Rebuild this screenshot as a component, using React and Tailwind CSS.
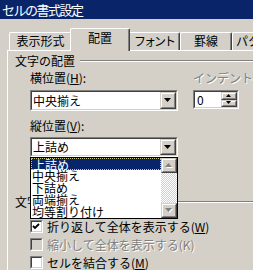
import React from 'react';

const Sunken = ({ className = '', inner = 'bg-white', children }) => (
  <div className={`border border-t-[#808080] border-l-[#808080] border-r-white border-b-white ${className}`}>
    <div className={`flex h-full w-full items-center border border-t-[#404040] border-l-[#404040] border-r-[#d4d0c8] border-b-[#d4d0c8] ${inner}`}>
      {children}
    </div>
  </div>
);

const Raised = ({ className = '', children }) => (
  <div className={`border border-t-[#d4d0c8] border-l-[#d4d0c8] border-r-[#404040] border-b-[#404040] bg-[#d4d0c8] ${className}`}>
    <div className="flex h-full w-full items-center justify-center border border-t-white border-l-white border-r-[#808080] border-b-[#808080]">
      {children}
    </div>
  </div>
);

const Arrow = ({ up = false, disabled = false, w = 7 }) => {
  const h = Math.ceil(w / 2);
  const pts = up ? `0,${h} ${w},${h} ${w / 2},0` : `0,0 ${w},0 ${w / 2},${h}`;
  return (
    <svg width={w + 1} height={h + 1} viewBox={`0 0 ${w + 1} ${h + 1}`}>
      {disabled && <polygon points={pts} fill="#fff" transform="translate(1,1)" />}
      <polygon points={pts} fill={disabled ? '#808080' : '#000'} />
    </svg>
  );
};

const Tab = ({ label, selected = false, className = '' }) =>
  selected ? (
    <div
      className={`relative -mx-[2px] flex h-[23px] shrink-0 items-start justify-center rounded-t-[2px] border-l border-t border-r border-l-white border-t-white border-r-[#404040] bg-[#d4d0c8] pt-[3px] shadow-[inset_-1px_0_0_#808080] ${className}`}
    >
      {label}
    </div>
  ) : (
    <div
      className={`mb-[1px] flex h-[18px] shrink-0 items-start justify-center rounded-t-[2px] border-l border-t border-r border-l-white border-t-white border-r-[#404040] pt-[2px] shadow-[inset_-1px_0_0_#808080] ${className}`}
    >
      {label}
    </div>
  );

const GroupLabel = ({ children }) => (
  <div className="flex h-[12px] items-center pl-[7px] leading-[12px]">
    <span className="shrink-0">{children}</span>
    <div className="ml-[5px] h-[2px] flex-1 border-t border-b border-t-[#808080] border-b-white" />
  </div>
);

const Checkbox = ({ checked = false, disabled = false, children }) => (
  <div className="flex h-[13px] items-center leading-[12px]">
    <Sunken className="h-[13px] w-[13px] shrink-0" inner={disabled ? 'bg-[#d4d0c8] justify-center' : 'bg-white justify-center'}>
      {checked && (
        <svg width="9" height="9" viewBox="0 0 9 9">
          <path d="M1 4 L3 6 L7 2" stroke="#000" strokeWidth="1.8" fill="none" />
        </svg>
      )}
    </Sunken>
    <span className={`ml-[4px] whitespace-nowrap ${disabled ? 'text-[#808080] [text-shadow:1px_1px_0_#fff]' : ''}`}>{children}</span>
  </div>
);

const listItems = ['上詰め', '中央揃え', '下詰め', '両端揃え', '均等割り付け'];

const App = () => {
  return (
    <div className="relative h-[270px] w-[253px] overflow-hidden bg-[#d4d0c8] font-['Noto_Sans_CJK_JP',sans-serif] text-[12px] text-black">
      <div className="h-[19px] bg-[#0a246a] pl-[2px] pt-[3px] text-[13px] leading-[13px] tracking-[-1.5px] text-white">
        セルの書式設定
      </div>

      <div className="relative z-10 flex h-[32px] items-end overflow-hidden pl-[9px] leading-[12px]">
        <Tab label="表示形式" className="w-[63px]" />
        <Tab label="配置" selected className="w-[60px]" />
        <Tab label="フォント" className="w-[52px] tracking-[-2px]" />
        <Tab label="罫線" className="w-[52px]" />
        <Tab label="パターン" className="w-[60px] justify-start pl-[3px]" />
      </div>

      <div className="-mt-px ml-[7px] h-[240px] border-l border-t border-white pt-[4px]">
        <GroupLabel>文字の配置</GroupLabel>

        <div className="mt-[5px] flex pl-[22px]">
          <div className="w-[148px] shrink-0">
            <div className="h-[12px] leading-[12px]">
              横位置(<span className="underline">H</span>):
            </div>
            <Sunken className="mt-[6px] h-[21px]">
              <span className="flex-1 pl-[1px] leading-[12px]">中央揃え</span>
              <Raised className="h-full w-[16px]">
                <Arrow />
              </Raised>
            </Sunken>
          </div>
          <div className="ml-[15px] w-[60px] shrink-0">
            <div className="h-[12px] whitespace-nowrap leading-[12px] text-[#808080] [text-shadow:1px_1px_0_#fff]">
              インデント(<span className="underline">I</span>):
            </div>
            <Sunken className="mt-[6px] h-[19px] w-[46px]">
              <span className="flex-1 pl-[2px] leading-[12px]">0</span>
              <div className="flex h-full w-[16px] flex-col">
                <Raised className="h-1/2 w-full">
                  <Arrow up w={5} />
                </Raised>
                <Raised className="h-1/2 w-full">
                  <Arrow w={5} />
                </Raised>
              </div>
            </Sunken>
          </div>
        </div>

        <div className="mt-[9px] pl-[22px]">
          <div className="h-[12px] leading-[12px]">
            縦位置(<span className="underline">V</span>):
          </div>
          <div className="relative z-20 mt-[5px] w-[148px]">
            <Sunken className="h-[20px]">
              <span className="flex-1 pl-[1px] leading-[12px]">上詰め</span>
              <Raised className="h-full w-[16px]">
                <Arrow />
              </Raised>
            </Sunken>
            <div className="absolute left-0 top-full flex h-[62px] w-[148px] border border-black bg-white">
              <div className="flex-1">
                {listItems.map((item, i) => (
                  <div
                    key={item}
                    className={`h-[12px] whitespace-nowrap pl-[1px] leading-[12px] ${
                      i === 0 ? 'border border-dotted border-[#c8c890] bg-[#0a246a] pl-0 leading-[10px] text-white' : ''
                    }`}
                  >
                    {item}
                  </div>
                ))}
              </div>
              <div className="flex w-[16px] flex-col">
                <Raised className="h-[15px] w-full">
                  <Arrow up disabled />
                </Raised>
                <div className="flex-1 bg-[repeating-conic-gradient(#d4d0c8_0_25%,#ffffff_0_50%)] bg-[length:2px_2px]" />
                <Raised className="h-[15px] w-full">
                  <Arrow disabled />
                </Raised>
              </div>
            </div>
          </div>
        </div>

        <div className="mt-[39px]">
          <GroupLabel>文字の制御</GroupLabel>
        </div>

        <div className="mt-[12px] flex flex-col gap-[5px] pl-[22px]">
          <Checkbox checked>
            折り返して全体を表示する(<span className="underline">W</span>)
          </Checkbox>
          <Checkbox disabled>縮小して全体を表示する(K)</Checkbox>
          <Checkbox>
            セルを結合する(<span className="underline">M</span>)
          </Checkbox>
        </div>
      </div>
    </div>
  );
};

export default App;
